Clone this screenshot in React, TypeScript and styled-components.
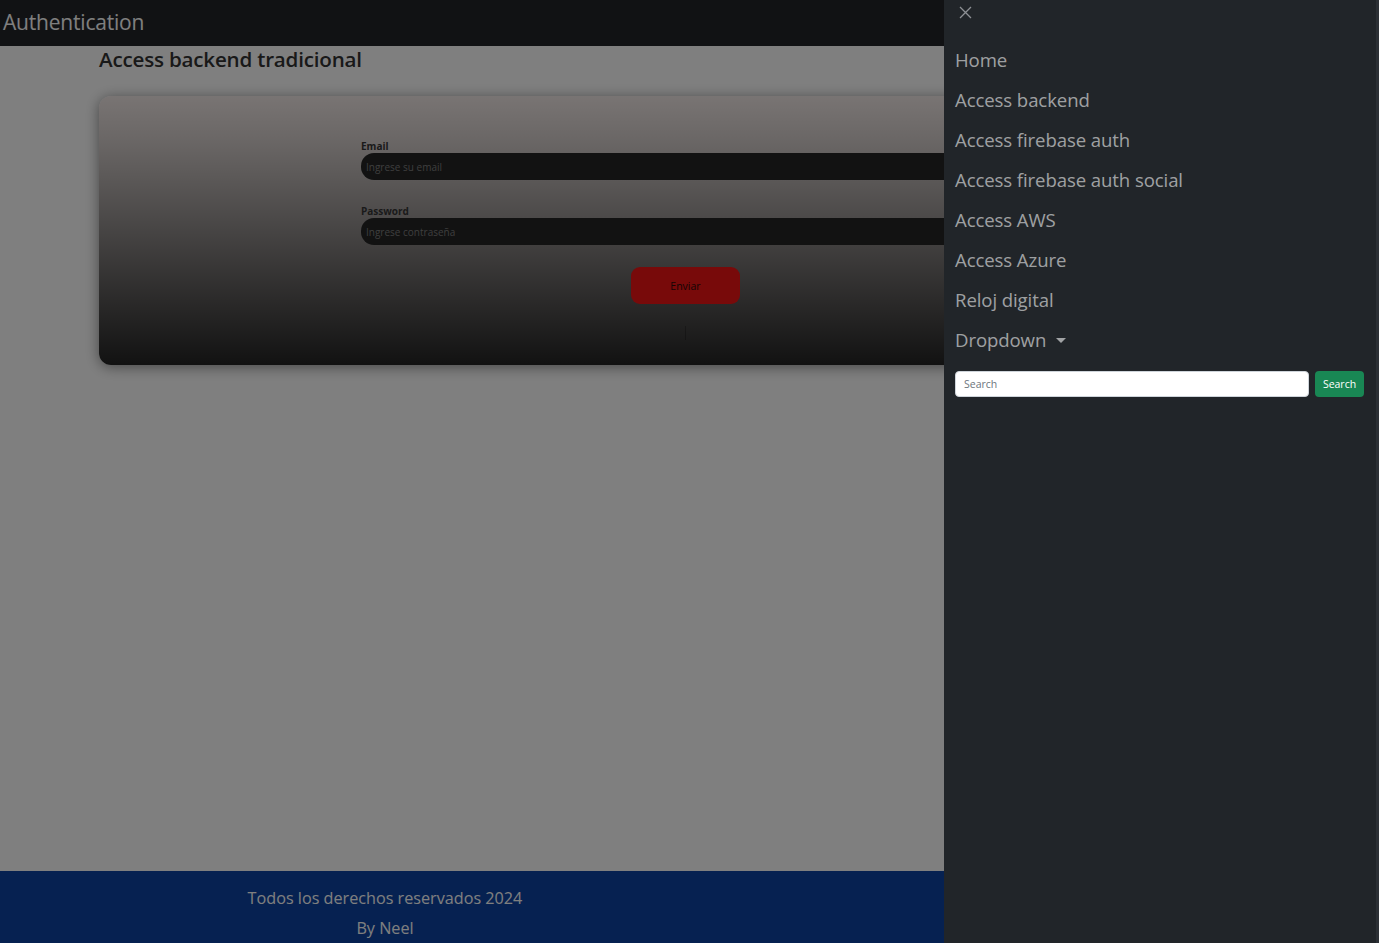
import React from "react";
import styled, { createGlobalStyle } from "styled-components";

const links = [
    "Home",
    "Access backend",
    "Access firebase auth",
    "Access firebase auth social",
    "Access AWS",
    "Access Azure",
    "Reloj digital",
];

export default function App() {
    return (
        <>
            <GlobalStyle />
            <Page>
                <Navbar>
                    <Brand>Authentication</Brand>
                </Navbar>

                <Main>
                    <Title>Access backend tradicional</Title>
                    <Card>
                        <Form>
                            <Field>
                                <Label>Email</Label>
                                <Input type="email" placeholder="Ingrese su email" />
                            </Field>
                            <Field>
                                <Label>Password</Label>
                                <Input type="password" placeholder="Ingrese contraseña" />
                            </Field>
                            <SubmitButton>Enviar</SubmitButton>
                            <Hint />
                        </Form>
                    </Card>
                </Main>

                <Footer>
                    <FooterColumn>
                        <FooterText>Todos los derechos reservados 2024</FooterText>
                        <FooterText>By Neel</FooterText>
                    </FooterColumn>
                </Footer>
            </Page>

            <Backdrop />

            <Offcanvas>
                <OffcanvasHeader>
                    <CloseButton aria-label="Close">
                        <svg width="13" height="13" viewBox="0 0 13 13">
                            <path d="M1 1L12 12M12 1L1 12" stroke="currentColor" strokeWidth="1.3" />
                        </svg>
                    </CloseButton>
                </OffcanvasHeader>
                <NavList>
                    {links.map((l) => (
                        <NavLink key={l}>{l}</NavLink>
                    ))}
                    <NavLink>
                        Dropdown <Caret />
                    </NavLink>
                </NavList>
                <SearchForm>
                    <SearchInput placeholder="Search" />
                    <SearchButton>Search</SearchButton>
                </SearchForm>
            </Offcanvas>
        </>
    );
}

const GlobalStyle = createGlobalStyle`
  * { box-sizing: border-box; }
  body {
    margin: 0;
    font-family: "Open Sans", "Noto Sans", sans-serif;
    background: #ffffff;
    overflow: hidden;
  }
`;

const Page = styled.div`
  min-height: 100vh;
  display: flex;
  flex-direction: column;
`;

const Navbar = styled.nav`
  height: 46px;
  background: #232529;
  display: flex;
  align-items: center;
  padding-left: 3px;
`;

const Brand = styled.span`
  font-size: 21px;
  color: #ffffff;
  letter-spacing: -0.2px;
  margin-top: -3px;
`;

const Main = styled.main`
  flex: 1;
  padding: 0 0 0 99px;
`;

const Title = styled.h2`
  margin: 0 0 24px;
  font-size: 20.6px;
  font-weight: 600;
  color: #333;
  letter-spacing: -0.2px;
  line-height: 26px;
`;

const Card = styled.div`
  width: 1173px;
  height: 269px;
  border-radius: 12px;
  background: linear-gradient(180deg, #f2e9e7 0%, #d2cbc9 18%, #242424 100%);
  box-shadow: 0 2px 14px rgba(0, 0, 0, 0.45);
  display: flex;
  justify-content: center;
  padding-top: 43px;
`;

const Form = styled.form`
  width: 649px;
  display: flex;
  flex-direction: column;
  align-items: center;
`;

const Field = styled.div`
  width: 100%;
  display: flex;
  flex-direction: column;
  margin-bottom: 24px;
`;

const Label = styled.label`
  font-size: 10px;
  font-weight: 700;
  color: #343434;
  line-height: 14px;
`;

const Input = styled.input`
  height: 27px;
  border: none;
  border-radius: 13px;
  background: #242424;
  padding: 0 5px;
  font-family: "Open Sans", "Noto Sans", sans-serif;
  font-size: 10px;
  color: #ddd;
  outline: none;

  &::placeholder {
    color: #7e7e7e;
  }
`;

const SubmitButton = styled.button`
  width: 109px;
  height: 37px;
  margin-top: -2px;
  border: none;
  border-radius: 9px;
  background: #f01414;
  color: #2a0a0a;
  font-family: "Open Sans", "Noto Sans", sans-serif;
  font-size: 10.5px;
  cursor: pointer;
`;

const Hint = styled.span`
  width: 1px;
  height: 14px;
  margin-top: 22px;
  background: rgba(0, 0, 0, 0.25);
`;

const Footer = styled.footer`
  height: 72px;
  background: #0c42a2;
  display: flex;
`;

const FooterColumn = styled.div`
  width: 770px;
  display: flex;
  flex-direction: column;
  align-items: center;
  padding-top: 12px;
`;

const FooterText = styled.p`
  margin: 0;
  font-size: 16.2px;
  line-height: 30px;
  color: #ffffff;
`;

const Backdrop = styled.div`
  position: fixed;
  inset: 0;
  background: rgba(0, 0, 0, 0.5);
`;

const Offcanvas = styled.aside`
  position: fixed;
  top: 0;
  right: 0;
  width: 435px;
  height: 100vh;
  background: #212529;
  padding: 0 12px 0 11px;
  border-right: 3px solid #2c3035;
`;

const OffcanvasHeader = styled.div`
  height: 39px;
  display: flex;
  align-items: flex-start;
`;

const CloseButton = styled.button`
  margin: 6px 0 0 4px;
  padding: 0;
  border: none;
  background: none;
  color: #8d9094;
  display: flex;
  cursor: pointer;
`;

const NavList = styled.ul`
  list-style: none;
  margin: 0;
  padding: 0;
`;

const NavLink = styled.li`
  height: 40px;
  display: flex;
  align-items: center;
  font-size: 18.6px;
  color: rgba(255, 255, 255, 0.58);
  letter-spacing: -0.1px;
  cursor: pointer;
`;

const Caret = styled.span`
  display: inline-block;
  margin-left: 10px;
  margin-top: 2px;
  border-top: 5px solid rgba(255, 255, 255, 0.58);
  border-left: 5px solid transparent;
  border-right: 5px solid transparent;
`;

const SearchForm = styled.form`
  display: flex;
  gap: 6px;
  margin-top: 12px;
`;

const SearchInput = styled.input`
  width: 354px;
  height: 26px;
  border: 1px solid #ced4da;
  border-radius: 4px;
  background: #fff;
  padding: 0 8px;
  font-family: "Open Sans", "Noto Sans", sans-serif;
  font-size: 10.5px;
  outline: none;

  &::placeholder {
    color: #6c757d;
  }
`;

const SearchButton = styled.button`
  width: 49px;
  height: 26px;
  border: none;
  border-radius: 4px;
  background: #198754;
  color: #fff;
  font-family: "Open Sans", "Noto Sans", sans-serif;
  font-size: 10.5px;
  padding: 0;
  cursor: pointer;
`;
